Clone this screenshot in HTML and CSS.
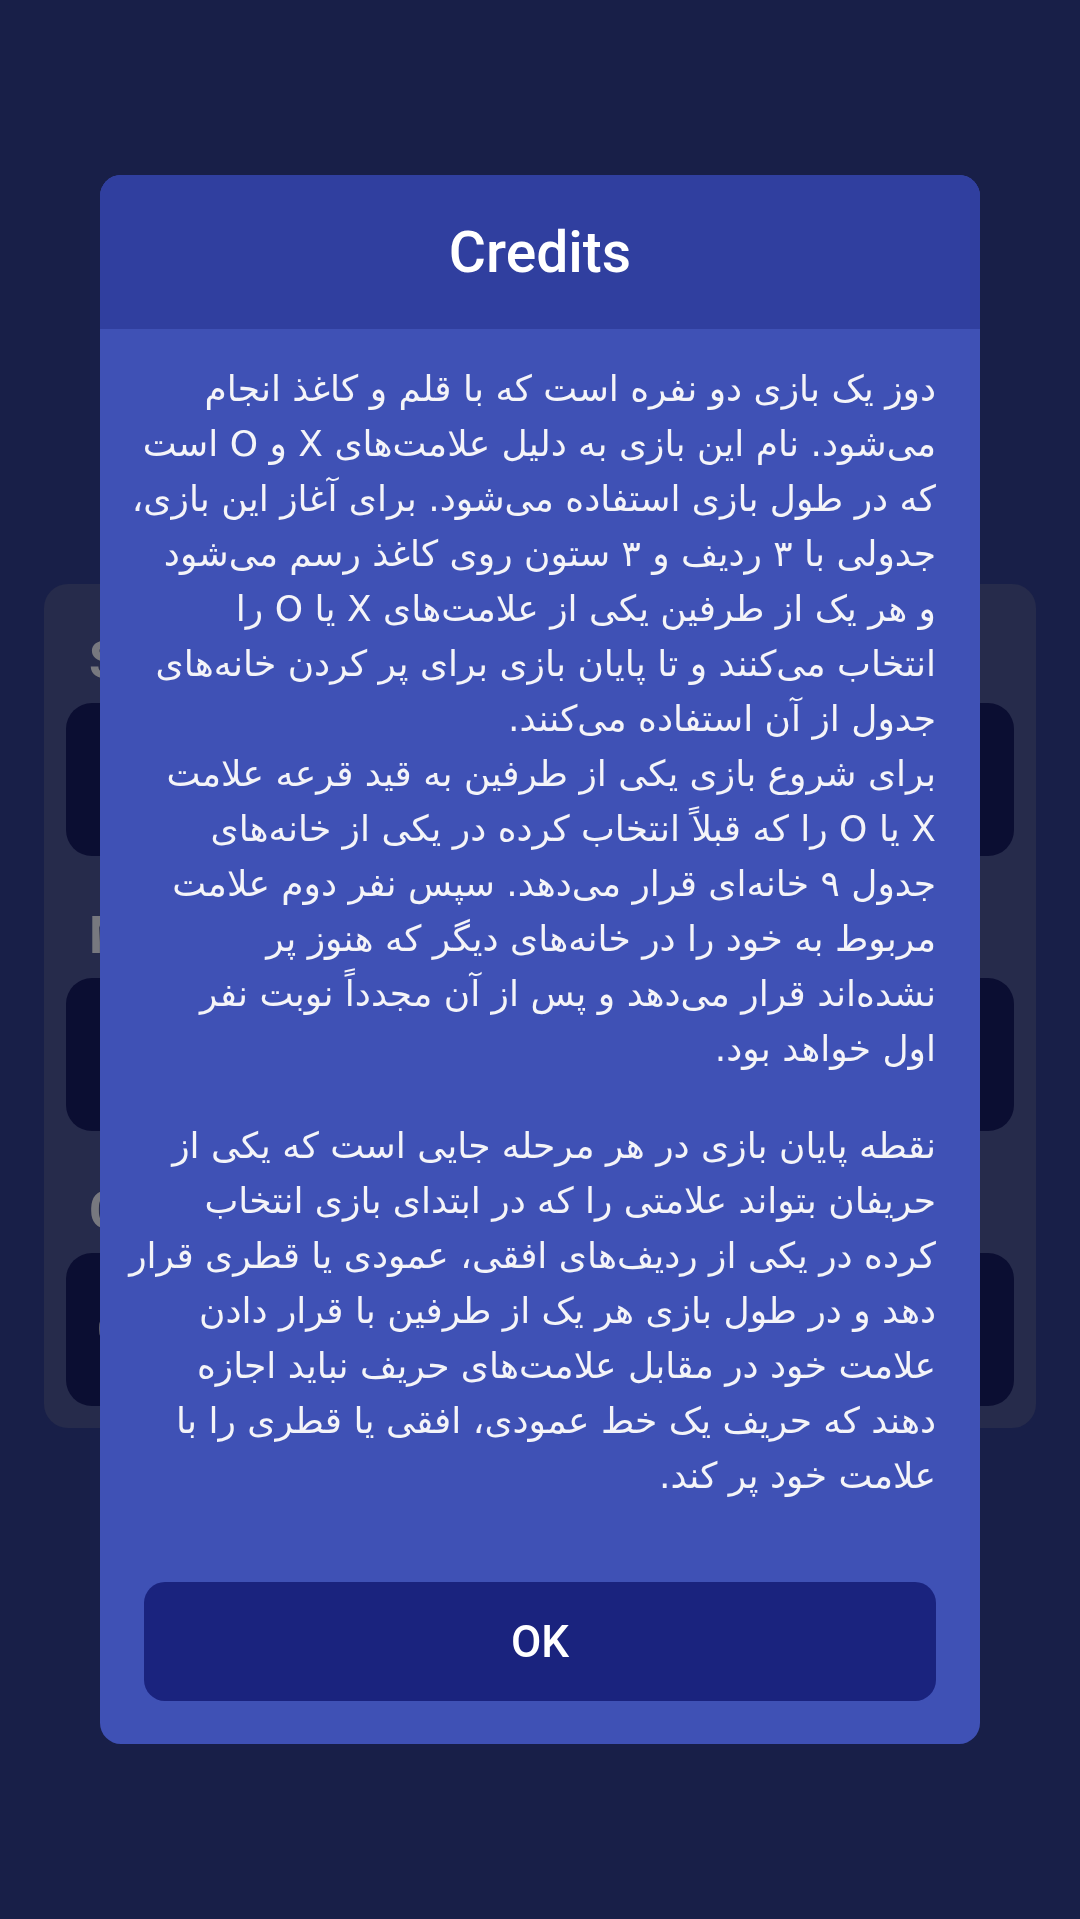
FILE: index.html
```html
<!DOCTYPE html>
<html lang="en">
<head>
    <meta charset="UTF-8">
    <meta name="viewport" content="width=device-width, initial-scale=1.0">
    <title>Tic Tac Toe - Settings</title>
    <link rel="stylesheet" href="styles.css">
</head>
<body>
    <!-- Settings card behind the dialog -->
    <div class="settings-card">
        <div class="setting">
            <div class="setting-label">Size</div>
            <div class="setting-box"></div>
        </div>
        <div class="setting">
            <div class="setting-label">Mode</div>
            <div class="setting-box"></div>
        </div>
        <div class="setting">
            <div class="setting-label">Color</div>
            <div class="setting-box"><span class="setting-value">O</span></div>
        </div>
    </div>

    <!-- Credits dialog -->
    <div class="overlay">
        <div class="dialog">
            <div class="dialog-header">Credits</div>
            <div class="dialog-body" dir="rtl" lang="fa">
                <p>دوز یک بازی دو نفره است که با قلم و کاغذ انجام<br>
                می‌شود. نام این بازی به دلیل علامت‌های X و O است<br>
                که در طول بازی استفاده می‌شود. برای آغاز این بازی،<br>
                جدولی با ۳ ردیف و ۳ ستون روی کاغذ رسم می‌شود<br>
                و هر یک از طرفین یکی از علامت‌های X یا O را<br>
                انتخاب می‌کنند و تا پایان بازی برای پر کردن خانه‌های<br>
                جدول از آن استفاده می‌کنند.<br>
                برای شروع بازی یکی از طرفین به قید قرعه علامت<br>
                X یا O را که قبلاً انتخاب کرده در یکی از خانه‌های<br>
                جدول ۹ خانه‌ای قرار می‌دهد. سپس نفر دوم علامت<br>
                مربوط به خود را در خانه‌های دیگر که هنوز پر<br>
                نشده‌اند قرار می‌دهد و پس از آن مجدداً نوبت نفر<br>
                اول خواهد بود.</p>
                <p>نقطه پایان بازی در هر مرحله جایی است که یکی از<br>
                حریفان بتواند علامتی را که در ابتدای بازی انتخاب<br>
                کرده در یکی از ردیف‌های افقی، عمودی یا قطری قرار<br>
                دهد و در طول بازی هر یک از طرفین با قرار دادن<br>
                علامت خود در مقابل علامت‌های حریف نباید اجازه<br>
                دهند که حریف یک خط عمودی، افقی یا قطری را با<br>
                علامت خود پر کند.</p>
                <button class="ok-button" dir="ltr">OK</button>
            </div>
        </div>
    </div>
</body>
</html>
```

FILE: styles.css
```css
body {
    font-family: 'Roboto', 'DejaVu Sans', sans-serif;
    background-color: #181f48;
    margin: 0;
    padding: 0;
    min-height: 1919px;
}
.settings-card {
    margin: 584px 44px 0;
    padding: 22px;
    background-color: #262b4b;
    border-radius: 24px;
    display: flex;
    flex-direction: column;
    gap: 25px;
}
.setting-label {
    font-size: 52px;
    font-weight: 700;
    line-height: 62px;
    padding: 24px 23px 11px;
    color: #77787f;
}
.setting-box {
    height: 153px;
    background-color: #0b0e32;
    border-radius: 26px;
    display: flex;
    align-items: center;
    padding: 0 31px;
}
.setting-value {
    font-size: 52px;
    font-weight: 700;
    color: #6d6e78;
}
.overlay {
    position: fixed;
    top: 0;
    left: 0;
    right: 0;
    bottom: 0;
    display: flex;
    justify-content: center;
    align-items: center;
}
.dialog {
    width: 880px;
    background-color: #3f51b5;
    border-radius: 21px;
    overflow: hidden;
}
.dialog-header {
    height: 154px;
    background-color: #303f9f;
    color: #ffffff;
    font-size: 57px;
    font-weight: 500;
    display: flex;
    align-items: center;
    justify-content: center;
}
.dialog-body {
    padding: 32px 44px 43px;
}
.dialog-body p {
    margin: 0;
    font-family: 'DejaVu Sans', sans-serif;
    font-size: 36px;
    line-height: 55px;
    color: #f4f4f8;
    white-space: nowrap;
}
.dialog-body p + p {
    margin-top: 42px;
}
.ok-button {
    display: block;
    width: 100%;
    height: 119px;
    margin-top: 79px;
    border: none;
    border-radius: 21px;
    background-color: #1a237e;
    color: #ffffff;
    font-family: 'Roboto', sans-serif;
    font-size: 44px;
    font-weight: 500;
}
```
